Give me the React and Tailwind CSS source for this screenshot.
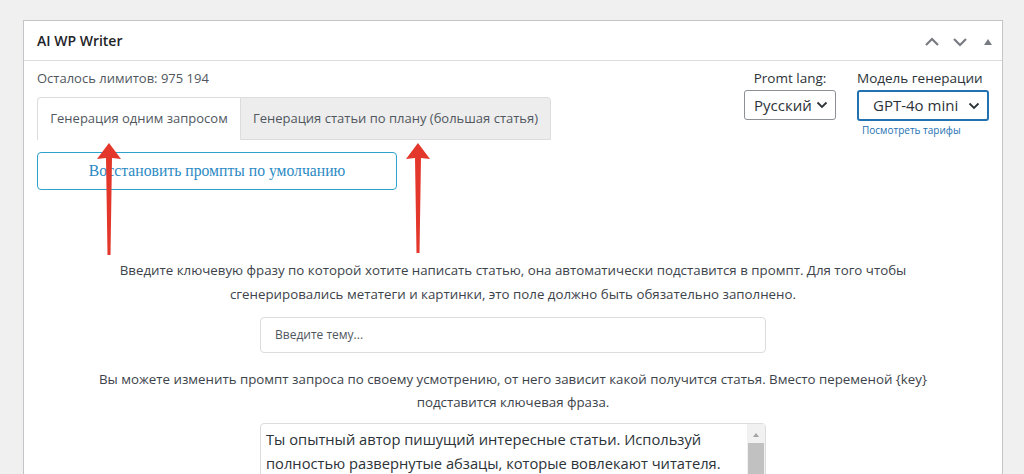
import React from 'react';

const Arrow = ({ x, top, bottom }) => (
  <path
    d={`M${x} ${top} L${x + 12} ${top + 16} L${x + 3} ${top + 15} L${x + 1.5} ${bottom} L${x - 1.5} ${bottom} L${x - 3} ${top + 15} L${x - 12} ${top + 16} Z`}
    fill="#e4372b"
  />
);

const Chevron = ({ up }) => (
  <svg width="16" height="10" viewBox="0 0 16 10" fill="none" stroke="#787c82" strokeWidth="2.2">
    <path d={up ? 'M2 8 L8 2 L14 8' : 'M2 2 L8 8 L14 2'} />
  </svg>
);

const App = () => {
  const sans = 'font-["Segoe_UI","Open_Sans",sans-serif]';

  return (
    <div className={`relative min-h-screen bg-[#f0f0f1] pt-5 pl-[23px] pr-[21px] ${sans}`}>
      <div className="border border-[#c3c4c7] bg-white">
        <div className="flex h-10 items-center justify-between border-b border-[#dcdcde] pl-[13px] pr-[8px]">
          <h2 className="text-[14px] font-semibold text-[#1d2327]">AI WP Writer</h2>
          <div className="flex items-center gap-3 pt-0.5">
            <Chevron up />
            <Chevron />
            <svg width="12" height="10" viewBox="0 0 12 10" className="ml-0.5">
              <path d="M6 2 L10 8 L2 8 Z" fill="#787c82" />
            </svg>
          </div>
        </div>

        <div className="px-[13px] pt-2 pb-10">
          <div className="flex justify-between">
            <div>
              <p className="text-[13px] leading-[18px] text-[#50575e]">Осталось лимитов: 975 194</p>
              <div className="mt-[10px] flex text-[13px] text-[#50575e]">
                <div className="flex h-[43px] w-[203px] items-center justify-center rounded-tl-[4px] border-t border-l border-[#dcdcde] bg-white">
                  Генерация одним запросом
                </div>
                <div className="flex h-[43px] w-[311px] items-center justify-center rounded-tr-[4px] border border-[#dcdcde] bg-[#ededed]">
                  Генерация статьи по плану (большая статья)
                </div>
              </div>
              <button className="mt-3 h-[38px] w-[360px] rounded-[4px] border border-[#2ea2cc] bg-white font-['Liberation_Serif',serif] text-[15.7px] text-[#2b8ac4]">
                Восстановить промпты по умолчанию
              </button>
            </div>

            <div className="flex gap-[21px] text-[#2c3338]">
              <div className="flex flex-col items-center">
                <span className="text-[13.5px] leading-[18px]">Promt lang:</span>
                <div className="mt-[3px] flex h-[30px] w-[92px] items-center justify-between rounded-[3px] border border-[#8c8f94] pl-[9px] pr-[7px] text-[15px]">
                  Русский
                  <svg width="12" height="8" viewBox="0 0 12 8" fill="none" stroke="#2c3338" strokeWidth="1.8">
                    <path d="M1.5 1.5 L6 6 L10.5 1.5" />
                  </svg>
                </div>
              </div>
              <div className="flex flex-col">
                <span className="text-[13.5px] leading-[18px]">Модель генерации</span>
                <div className="mt-[3px] flex h-[31px] w-[132px] items-center justify-between rounded-[3px] border-2 border-[#2271b1] pl-[14px] pr-[7px] text-[15px]">
                  GPT-4o mini
                  <svg width="12" height="8" viewBox="0 0 12 8" fill="none" stroke="#2c3338" strokeWidth="1.8">
                    <path d="M1.5 1.5 L6 6 L10.5 1.5" />
                  </svg>
                </div>
                <a className="mt-[2px] pl-[5px] text-[10px] text-[#2271b1]">Посмотреть тарифы</a>
              </div>
            </div>
          </div>

          <div className="mt-[68px] flex flex-col items-center text-center font-['Open_Sans',sans-serif]">
            <p className="max-w-[822px] text-[13.3px] leading-[24px] text-[#3c434a]">
              Введите ключевую фразу по которой хотите написать статью, она автоматически подставится в промпт. Для того чтобы сгенерировались метатеги и картинки, это поле должно быть обязательно заполнено.
            </p>
            <div className="mt-[11px] flex h-[36px] w-[506px] items-center rounded-[4px] border border-[#dcdcde] px-[14px] text-left text-[12px] text-[#50575e]">
              Введите тему...
            </div>
            <p className="mt-[15px] max-w-[850px] text-[13.3px] leading-[23px] text-[#3c434a]">
              Вы можете изменить промпт запроса по своему усмотрению, от него зависит какой получится статья. Вместо переменой {'{key}'} подставится ключевая фраза.
            </p>
            <div className="mt-[9px] flex h-[120px] w-[506px] rounded-[4px] border border-[#dcdcde] text-left">
              <p className="flex-1 pl-[5px] pr-[10px] pt-[3px] text-[14.7px] leading-[24px] text-[#2c3338]">
                Ты опытный автор пишущий интересные статьи. Используй полностью развернутые абзацы, которые вовлекают читателя. Пиши понятно и интересно.
              </p>
              <div className="flex w-[18px] flex-col items-center bg-[#f1f1f1]">
                <svg width="8" height="6" viewBox="0 0 8 6" className="mt-[8px]">
                  <path d="M4 1 L7 5 L1 5 Z" fill="#a3a3a3" />
                </svg>
                <div className="mt-[5px] h-[80px] w-[16px] bg-[#c1c1c1]" />
              </div>
            </div>
          </div>
        </div>
      </div>

      <svg className="pointer-events-none absolute left-0 top-0" width="1024" height="474">
        <Arrow x={109} top={143} bottom={255} />
        <Arrow x={418} top={143} bottom={253} />
      </svg>
    </div>
  );
};

export default App;
